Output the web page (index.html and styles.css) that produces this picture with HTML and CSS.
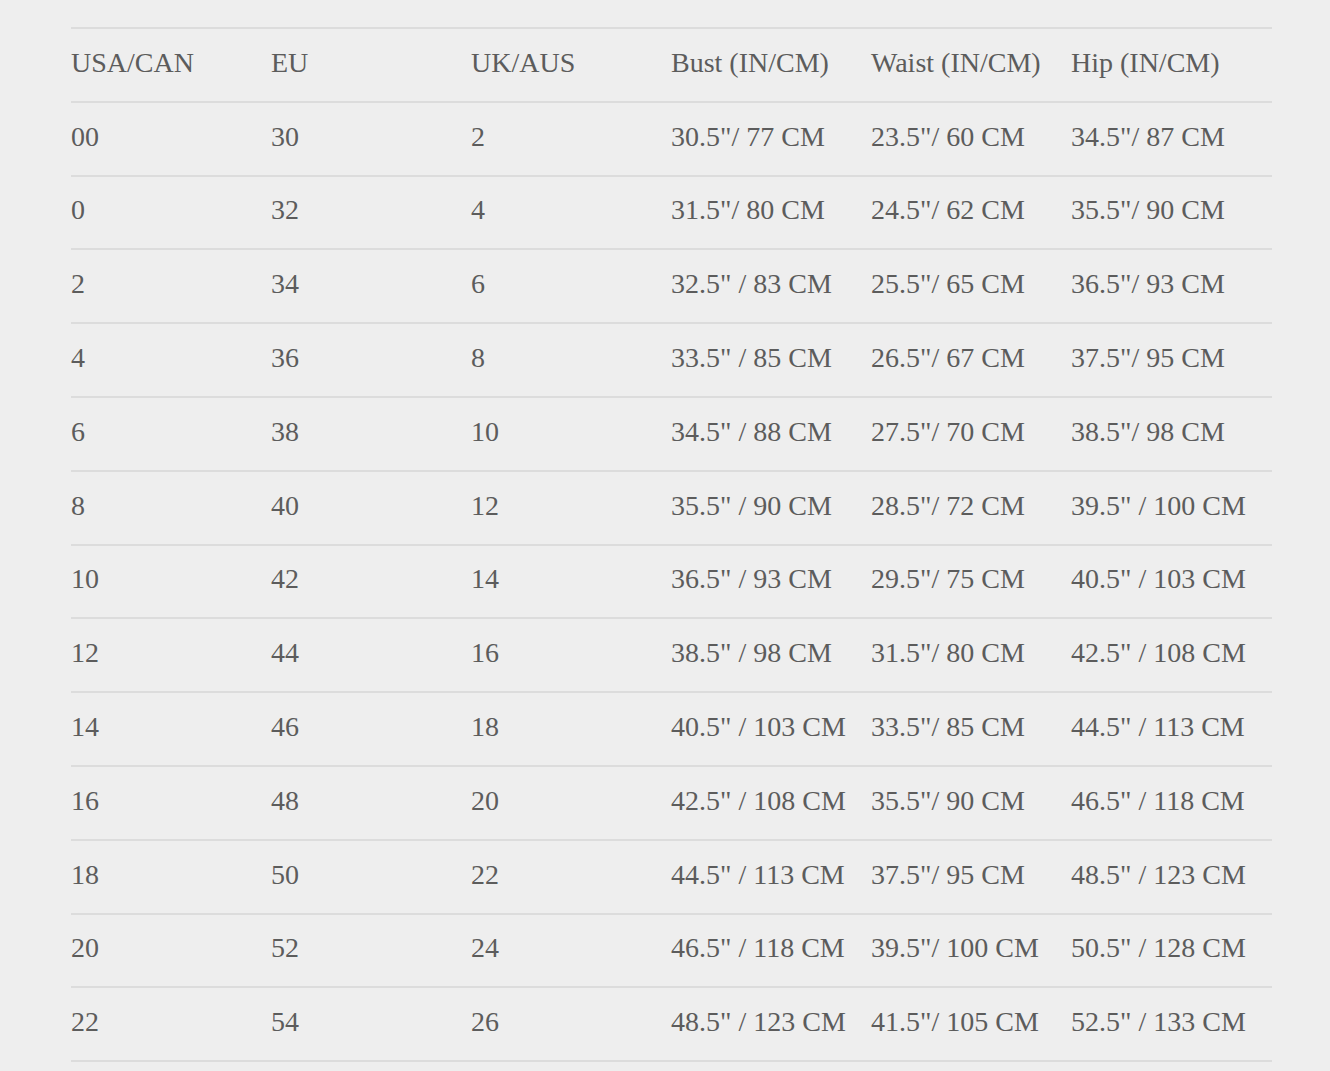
FILE: index.html
```html
<!DOCTYPE html>
<html lang="en">
<head>
<meta charset="utf-8">
<title>Size Chart</title>
<link rel="stylesheet" href="styles.css">
</head>
<body>
<div class="wrap">
<table class="chart">
<thead>
<tr><th>USA/CAN</th><th>EU</th><th>UK/AUS</th><th>Bust (IN/CM)</th><th>Waist (IN/CM)</th><th>Hip (IN/CM)</th></tr>
</thead>
<tbody>
<tr><td>00</td><td>30</td><td>2</td><td>30.5"/ 77 CM</td><td>23.5"/ 60 CM</td><td>34.5"/ 87 CM</td></tr>
<tr><td>0</td><td>32</td><td>4</td><td>31.5"/ 80 CM</td><td>24.5"/ 62 CM</td><td>35.5"/ 90 CM</td></tr>
<tr><td>2</td><td>34</td><td>6</td><td>32.5" / 83 CM</td><td>25.5"/ 65 CM</td><td>36.5"/ 93 CM</td></tr>
<tr><td>4</td><td>36</td><td>8</td><td>33.5" / 85 CM</td><td>26.5"/ 67 CM</td><td>37.5"/ 95 CM</td></tr>
<tr><td>6</td><td>38</td><td>10</td><td>34.5" / 88 CM</td><td>27.5"/ 70 CM</td><td>38.5"/ 98 CM</td></tr>
<tr><td>8</td><td>40</td><td>12</td><td>35.5" / 90 CM</td><td>28.5"/ 72 CM</td><td>39.5" / 100 CM</td></tr>
<tr><td>10</td><td>42</td><td>14</td><td>36.5" / 93 CM</td><td>29.5"/ 75 CM</td><td>40.5" / 103 CM</td></tr>
<tr><td>12</td><td>44</td><td>16</td><td>38.5" / 98 CM</td><td>31.5"/ 80 CM</td><td>42.5" / 108 CM</td></tr>
<tr><td>14</td><td>46</td><td>18</td><td>40.5" / 103 CM</td><td>33.5"/ 85 CM</td><td>44.5" / 113 CM</td></tr>
<tr><td>16</td><td>48</td><td>20</td><td>42.5" / 108 CM</td><td>35.5"/ 90 CM</td><td>46.5" / 118 CM</td></tr>
<tr><td>18</td><td>50</td><td>22</td><td>44.5" / 113 CM</td><td>37.5"/ 95 CM</td><td>48.5" / 123 CM</td></tr>
<tr><td>20</td><td>52</td><td>24</td><td>46.5" / 118 CM</td><td>39.5"/ 100 CM</td><td>50.5" / 128 CM</td></tr>
<tr><td>22</td><td>54</td><td>26</td><td>48.5" / 123 CM</td><td>41.5"/ 105 CM</td><td>52.5" / 133 CM</td></tr>
</tbody>
</table>
</div>
</body>
</html>
```

FILE: styles.css
```css
html, body {
  margin: 0;
  padding: 0;
  background: #eeeeee;
}
.wrap {
  padding: 27px 0 0 71px;
}
.chart {
  width: 1201px;
  border-collapse: collapse;
  table-layout: fixed;
  font-family: "Liberation Serif", "Times New Roman", serif;
  font-size: 28px;
  color: #5c5c5c;
  border-top: 2px solid #dcdcdc;
}
.chart th,
.chart td {
  width: 200px;
  height: 73.8px;
  padding: 0 0 4px 0;
  text-align: left;
  font-weight: normal;
  vertical-align: middle;
  white-space: nowrap;
  border-bottom: 2px solid #dcdcdc;
  box-sizing: border-box;
}
.chart th:last-child,
.chart td:last-child {
  width: 201px;
}
```
